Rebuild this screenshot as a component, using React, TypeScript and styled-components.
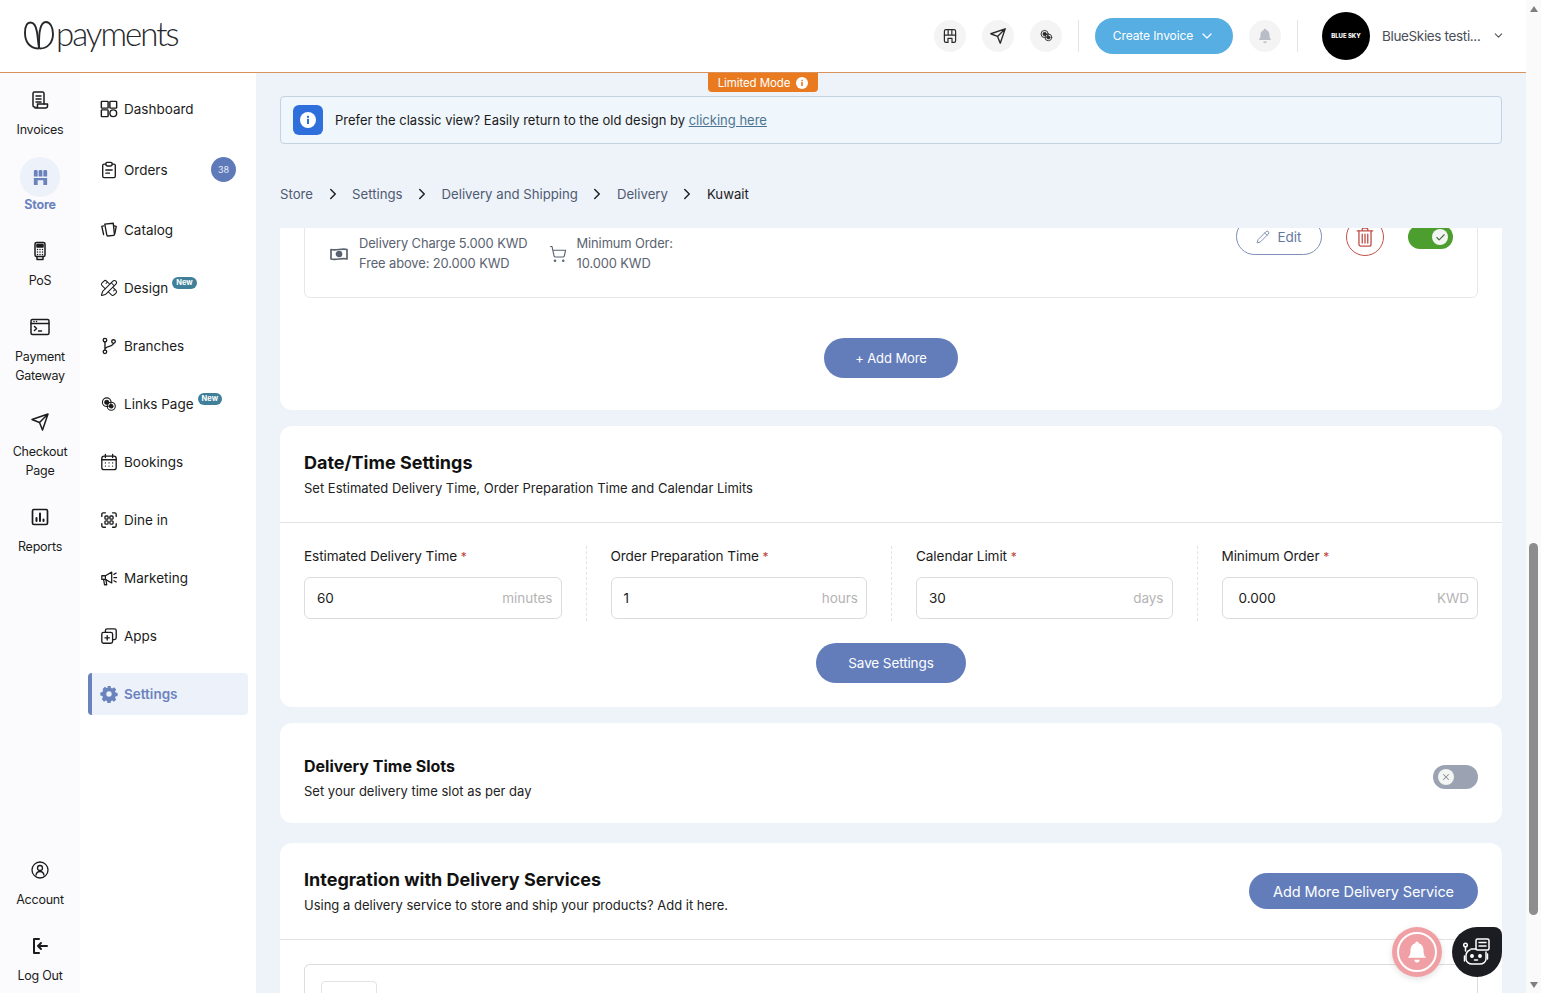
import React from "react";
import styled, { createGlobalStyle } from "styled-components";
import { Check, ChevronDown, ChevronRight, Pencil, ShoppingCart, X, PencilRuler } from "lucide-react";

const Global = createGlobalStyle`
  html, body { margin: 0; padding: 0; height: 100%; overflow: hidden; background: #eef2f9; }
  body { font-family: Inter, "Liberation Sans", sans-serif; color: #1b1b1b; }
  * { box-sizing: border-box; }
`;

const Page = styled.div`display: flex; width: 1541px; height: 993px; overflow: hidden;`;
const Viewport = styled.div`width: 1526px; height: 993px; display: flex; flex-direction: column; position: relative;`;
const Scrollbar = styled.div`width: 15px; height: 993px; background: #fafafa; display: flex; flex-direction: column; align-items: center; justify-content: space-between; padding: 6px 0 5px;`;
const ScrollTrack = styled.div`flex: 1; width: 100%; display: flex; flex-direction: column; justify-content: flex-end; padding: 0 3px 67px;`;
const ScrollThumb = styled.div`height: 372px; width: 9px; background: #8d8d8d; border-radius: 5px;`;
const Arrow = styled.div<{ $down?: boolean }>`
  width: 0; height: 0; border-left: 4px solid transparent; border-right: 4px solid transparent;
  ${(p) => (p.$down ? "border-top: 6px solid #7f7f7f;" : "border-bottom: 6px solid #7f7f7f;")}
`;

const Header = styled.header`height: 73px; flex: none; background: #fff; border-bottom: 1px solid #d9925c; display: flex; align-items: center; padding: 0 21px 1px 24px;`;
const LogoWrap = styled.div`display: flex; align-items: center; gap: 2px; flex: 1; color: #26282b;`;
const LogoText = styled.span`font-family: Lato, sans-serif; font-weight: 300; font-size: 33px; line-height: 40px; letter-spacing: -2px; margin-top: -5px;`;
const RoundIcon = styled.div<{ $muted?: boolean }>`width: 32px; height: 32px; border-radius: 50%; background: #f4f4f4; display: flex; align-items: center; justify-content: center; color: ${(p) => (p.$muted ? "#b9bec6" : "#2a2a2a")};`;
const IconGroup = styled.div`display: flex; gap: 16px; margin-right: 16px;`;
const VRule = styled.div<{ $gap?: number }>`width: 1px; height: 32px; background: #e4e4e4; margin-left: ${(p) => p.$gap ?? 0}px;`;
const CreateBtn = styled.button`
  width: 138px; height: 36px; margin: 0 16px; border: 0; border-radius: 18px; background: #56aee2; color: #fff;
  font: 400 12px Inter, sans-serif; letter-spacing: -0.1px; display: flex; align-items: center; justify-content: center; gap: 6px;
`;
const Avatar = styled.div`width: 48px; height: 48px; border-radius: 50%; background: #000; color: #fff; margin-left: 24px; font-size: 6px; font-weight: 800; display: flex; align-items: center; justify-content: center; white-space: nowrap;`;
const UserName = styled.span`font-size: 13.500px; letter-spacing: -0.35px; color: #4a4f57; margin-left: 12px; width: 110px; white-space: nowrap;`;

const Body = styled.div`flex: 1; display: flex; min-height: 0;`;
const Rail = styled.nav`width: 80px; flex: none; background: #fbfbfd; padding: 17px 0 8px; display: flex; flex-direction: column; justify-content: space-between;`;
const RailGroup = styled.div`display: flex; flex-direction: column; gap: 27px;`;
const RailItem = styled.div<{ $active?: boolean }>`
  display: flex; flex-direction: column; align-items: center; gap: ${(p) => (p.$active ? "0" : "10px")};
  ${(p) => p.$active && "margin-top: -9px;"}
`;
const RailBubble = styled.div`width: 40px; height: 40px; border-radius: 50%; background: #edf1f9; color: #6b83bd; display: flex; align-items: center; justify-content: center; margin-bottom: -2px;`;
const RailLabel = styled.div<{ $active?: boolean }>`
  font-size: 12.500px; line-height: 19px; text-align: center; letter-spacing: -0.25px;
  color: ${(p) => (p.$active ? "#6b83bd" : "#1b1b1b")}; font-weight: ${(p) => (p.$active ? 700 : 400)};
`;
const Side = styled.nav`width: 176px; flex: none; background: #fff; padding: 15px 8px 0; display: flex; flex-direction: column; gap: 16px;`;
const SideRow = styled.div<{ $active?: boolean; $tall?: boolean }>`
  height: ${(p) => (p.$tall ? 47 : 42)}px; display: flex; align-items: center; gap: 6px; padding-left: ${(p) => (p.$active ? 8 : 12)}px; padding-right: 12px; border-radius: 4px;
  font-size: 13.500px; ${(p) => p.$active && "border-left: 4px solid #6b83bd; background: #edf1f9; color: #6b83bd; font-weight: 600;"}
`;
const CountBadge = styled.span`width: 25px; height: 25px; border-radius: 50%; background: #5f7ab9; color: #e8edf8; font-size: 9px; display: flex; align-items: center; justify-content: center; margin-left: auto;`;
const NewBadge = styled.span`height: 12px; padding: 0 4px; border-radius: 7px; background: #3f7f9a; color: #fff; font-size: 7.500px; font-weight: 700; line-height: 12px; margin: -10px 0 0 -2px;`;

const Main = styled.main`flex: 1; min-width: 0; background: #eef2f9; padding: 23px 24px 0; display: flex; flex-direction: column; position: relative; overflow: hidden;`;
const LimitedTab = styled.div`position: absolute; top: 0; left: 452px; width: 110px; height: 19px; background: #e97a1f; color: #fff; border-radius: 0 0 4px 4px; font-size: 11.500px; display: flex; align-items: center; justify-content: center; gap: 6px; letter-spacing: -0.1px;`;
const Notice = styled.div`height: 48px; flex: none; background: #eff6fc; border: 1px solid #c5d2e2; border-radius: 4px; display: flex; align-items: center; gap: 12px; padding-left: 12px; font-size: 13px;`;
const NoticeIcon = styled.div`width: 30px; height: 30px; border-radius: 6px; background: #2f6fdb; display: flex; align-items: center; justify-content: center;`;
const NoticeLink = styled.a`color: #4e7491; text-decoration: underline;`;
const Crumbs = styled.div`height: 84px; flex: none; padding-top: 40px; display: flex; align-items: flex-start; font-size: 13.200px; line-height: 20px; color: #4e5b72;`;
const Crumb = styled.span<{ $current?: boolean }>`${(p) => p.$current && "color: #1b1b1b;"}`;
const CrumbSep = styled.span`display: flex; align-items: center; justify-content: center; width: 39px; height: 20px; color: #222;`;
const Scroller = styled.div`flex: 1; min-height: 0; overflow: hidden;`;
const Card = styled.section<{ $clipped?: boolean; $mt?: number }>`background: #fff; border-radius: 12px; margin-top: ${(p) => (p.$clipped ? -31 : p.$mt ?? 16)}px;`;
const FirstCardBody = styled.div`padding: 10px 24px 32px;`;
const RuleBox = styled.div`border: 1px solid #e8e8e8; border-radius: 6px; padding: 10px 24px 23px; display: flex; align-items: flex-start;`;
const Fee = styled.div<{ $ml?: number }>`display: flex; align-items: center; gap: 10px; margin: 16px 0 0 ${(p) => p.$ml ?? 0}px; font-size: 12.900px; line-height: 20px; color: #5a6270; letter-spacing: -0.1px;`;
const Actions = styled.div`margin-left: auto; display: flex; align-items: flex-start; gap: 24px;`;
const EditBtn = styled.button`width: 86px; height: 37px; border: 1px solid #7d8fb8; border-radius: 19px; background: #fff; color: #64789f; font: 400 13.500px Inter, sans-serif; display: flex; align-items: center; justify-content: center; gap: 7px;`;
const TrashBtn = styled.button`width: 38px; height: 38px; border-radius: 50%; border: 1px solid #c2504a; background: #fff; color: #c2504a; display: flex; align-items: center; justify-content: center; padding: 0;`;
const Toggle = styled.div<{ $on?: boolean; $mt?: number }>`
  width: 45px; height: 24px; border-radius: 12px; background: ${(p) => (p.$on ? "#4c9f2f" : "#9ba3b2")};
  display: flex; align-items: center; justify-content: ${(p) => (p.$on ? "flex-end" : "flex-start")}; padding: 0 5px; flex: none;
  margin-top: ${(p) => p.$mt ?? 0}px;
`;
const Knob = styled.div`width: 16px; height: 16px; border-radius: 50%; background: #f3f5f2; color: #4a6b48; display: flex; align-items: center; justify-content: center;`;
const CenterRow = styled.div<{ $top: number; $bottom?: number }>`display: flex; justify-content: center; padding: ${(p) => p.$top}px 0 ${(p) => p.$bottom ?? 0}px;`;
const PillBtn = styled.button<{ $w: number; $h?: number; $fs?: number; $mt?: number }>`
  width: ${(p) => p.$w}px; height: ${(p) => p.$h ?? 40}px; border: 0; border-radius: 20px; background: #637dbb; color: #fff; flex: none;
  font: 400 ${(p) => p.$fs ?? 13.5}px Inter, sans-serif; letter-spacing: -0.1px; margin-top: ${(p) => p.$mt ?? 0}px;
`;
const CardHead = styled.div<{ $h: number; $pt: number; $divider?: boolean }>`
  height: ${(p) => p.$h}px; padding: ${(p) => p.$pt}px 24px 0; display: flex; justify-content: space-between; align-items: flex-start;
  ${(p) => p.$divider && "border-bottom: 1px solid #e3e3e3;"}
`;
const Title = styled.h2<{ $size?: number }>`margin: 0; font-size: ${(p) => p.$size ?? 18}px; line-height: 24px; font-weight: 700; color: #111;`;
const Sub = styled.p`margin: 2px 0 0; font-size: 13px; line-height: 22px; color: #222;`;
const Fields = styled.div`display: grid; grid-template-columns: repeat(4, 1fr); padding-top: 23px;`;
const Field = styled.div`padding: 0 24px; &:not(:first-child) { border-left: 1px dashed #e3e3e3; } height: 75px;`;
const Label = styled.div`font-size: 13.600px; line-height: 20px; letter-spacing: -0.1px; height: 32px;`;
const Required = styled.span`color: #c2403a; font-size: 12px;`;
const InputBox = styled.div<{ $inset?: number }>`height: 42px; margin-top: -1px; border: 1px solid #dcdcdc; border-radius: 6px; display: flex; align-items: center; justify-content: space-between; padding: 0 8px 0 ${(p) => p.$inset ?? 12}px; font-size: 13.500px;`;
const Unit = styled.span`color: #b4b4b4;`;
const ServiceBox = styled.div`margin: 24px 24px 0; height: 60px; border: 1px solid #dcdcdc; border-bottom: 0; border-radius: 6px 6px 0 0; padding: 16px 16px 0;`;
const ServiceThumb = styled.div`width: 56px; height: 44px; border: 1px solid #e3e3e3; border-radius: 4px;`;
const BellFab = styled.div`position: absolute; left: 1392px; top: 927px; width: 50px; height: 50px; border-radius: 50%; background: #f0a0a5; display: flex; align-items: center; justify-content: center; box-shadow: 0 2px 6px rgba(0,0,0,.12);`;
const BellRing = styled.div`width: 40px; height: 40px; border: 2px solid #fff; border-radius: 50%; display: flex; align-items: center; justify-content: center; color: #fff;`;
const BotFab = styled.div`position: absolute; left: 1452px; top: 927px; width: 50px; height: 50px; border-radius: 25px 8px 25px 25px; background: #1c1d22; color: #fff; display: flex; align-items: center; justify-content: center;`;

const Svg = styled.svg<{ $s?: number; $w?: number }>`
  width: ${(p) => p.$s ?? 20}px; height: ${(p) => p.$s ?? 20}px; flex: none; fill: none; stroke: currentColor; stroke-width: ${(p) => p.$w ?? 1.5}; stroke-linecap: round; stroke-linejoin: round;
`;
type IP = { s?: number; w?: number; children: React.ReactNode };
const I = ({ s, w, children }: IP) => <Svg viewBox="0 0 20 20" $s={s} $w={w}>{children}</Svg>;

const Invoice = () => <I><path d="M5 17H4.500A1.500 1.500 0 0 1 3 15.500V3.500A1.500 1.500 0 0 1 4.500 2h8A1.500 1.500 0 0 1 14 3.500V14" /><path d="M6 6h5M6 9h5M6 12h5" /><path d="M5 18h10.500a2 2 0 0 0 2-2v-2H7.500v2a2 2 0 0 1-2 2" /></I>;
const StoreSolid = () => <Svg viewBox="0 0 20 20" $s={19} $w={0}><path fill="currentColor" d="M3 3.500A1.500 1.500 0 0 1 4.500 2h1A1.500 1.500 0 0 1 7 3.500V9H3zM8 3.500A1.500 1.500 0 0 1 9.500 2h1A1.500 1.500 0 0 1 12 3.500V9H8zM13 3.500A1.500 1.500 0 0 1 14.500 2h1A1.500 1.500 0 0 1 17 3.500V9h-4zM3 10.500h14V17a1 1 0 0 1-1 1h-3v-5H7v5H4a1 1 0 0 1-1-1z" /></Svg>;
const StoreLine = () => <I s={16} w={1.500}><path d="M3 9V4a2 2 0 0 1 2-2h10a2 2 0 0 1 2 2v5zM7.700 2v7M12.300 2v7" /><path d="M3 9v7a2 2 0 0 0 2 2h2.500v-5h5v5H15a2 2 0 0 0 2-2V9" /></I>;
const Pos = () => <I><rect x="5" y="1.500" width="10" height="14" rx="1.500" /><rect x="7" y="3.500" width="6" height="2.500" fill="currentColor" /><path d="M7.500 8.500h.01M10 8.500h.01M12.500 8.500h.01M7.500 11h.01M10 11h.01M12.500 11h.01M7.500 13.500h.01M10 13.500h.01M12.500 13.500h.01" /><path d="M7 15.500v3h6v-3" /></I>;
const Gateway = () => <I><rect x="1" y="2.500" width="18" height="15" rx="1.500" /><path d="M1 6.500h18M4 4.500h.01M6.500 4.500h.01" /><path d="M4.500 9.500l2 2-2 2M8.500 14h3" /></I>;
const Plane = ({ s = 20 }: { s?: number }) => <I s={s}><path d="M2 7.500L18 2l-5.500 16-3-7.500zM9.500 10.500L18 2" /></I>;
const Reports = () => <I w={1.700}><rect x="2.500" y="2.500" width="15" height="15" rx="1.500" /><path d="M6.500 14v-3M10 14V6.500M13.500 14v-1.500" strokeWidth="2" /></I>;
const Account = () => <I w={1.300}><circle cx="10" cy="10" r="8" /><circle cx="10" cy="8" r="2.500" /><path d="M6 15c.5-2.500 2-3.500 4-3.500s3.500 1 4 3.500" /></I>;
const Logout = () => <I w={2}><path d="M9 3H4v14h5" /><path d="M17 10H8M11 7l-3 3 3 3" /></I>;
const Dash = () => <I s={18} w={1.600}><rect x="1.500" y="1.500" width="7.500" height="7.500" rx=".8" /><rect x="11" y="1.500" width="7.500" height="7.500" rx=".8" /><rect x="1.500" y="11" width="7.500" height="7.500" rx=".8" /><circle cx="14.750" cy="14.750" r="3.750" /></I>;
const Orders = () => <I s={18}><path d="M6.500 3.500H4.500A1.500 1.500 0 0 0 3 5v12a1.500 1.500 0 0 0 1.500 1.500h11A1.500 1.500 0 0 0 17 17V5a1.500 1.500 0 0 0-1.500-1.500h-2" /><rect x="6.500" y="1.500" width="7" height="4" rx="1.500" /><path d="M6.500 10h7M6.500 13.500h4" /></I>;
const Catalog = () => <I s={18}><path d="M6 3h9.500v12.500a1 1 0 0 1-1 1H8a1 1 0 0 1-1-1z" transform="rotate(-6 10 10)" /><path d="M4 5.500L2 6l2 9M16 5.500l2 .5-1.500 8" /></I>;
const Branch = () => <I s={18}><circle cx="5.500" cy="3.500" r="2" /><circle cx="5.500" cy="16.500" r="2" /><circle cx="15" cy="5" r="2" /><path d="M5.500 5.500v9M15 7c0 4-9.500 3-9.500 7" /></I>;
const Links = ({ s = 16 }: { s?: number }) => <I s={s} w={1.200}><circle cx="7.500" cy="8" r="4.800" /><circle cx="12.500" cy="12.500" r="4.500" /><circle cx="7.500" cy="8" r="2.200" fill="currentColor" /><circle cx="12.500" cy="12.500" r="2" fill="currentColor" /></I>;
const Calendar = () => <I s={18}><rect x="2" y="3.500" width="16" height="15" rx="2.500" /><path d="M2 7.500h16M6 1.500v3.500M14 1.500v3.500" /><path d="M6 11h.01M10 11h.01M14 11h.01M6 14.500h.01M10 14.500h.01M14 14.500h.01" /></I>;
const DineIn = () => <I s={18}><path d="M2 6V3.500A1.500 1.500 0 0 1 3.500 2H6M14 2h2.500A1.500 1.500 0 0 1 18 3.500V6M18 14v2.500a1.500 1.500 0 0 1-1.500 1.500H14M6 18H3.500A1.500 1.500 0 0 1 2 16.500V14" /><rect x="5.500" y="5.500" width="3.500" height="3.500" rx="1" /><rect x="11" y="5.500" width="3.500" height="3.500" rx="1" /><rect x="5.500" y="11" width="3.500" height="3.500" rx="1" /><rect x="11" y="11" width="3.500" height="3.500" rx="1" /></I>;
const Marketing = () => <I s={18} w={1.400}><path d="M2 7.500h4l7-4v12l-7-4H2z" /><path d="M6 7.500v4M4 11.500l1 6h2.500l-1-6" /><path d="M15.500 6l2.500-1.500M15.500 9.500H18.500M15.500 13l2.500 1.500" /></I>;
const Apps = () => <I s={18}><rect x="2" y="6" width="12" height="12" rx="2" /><path d="M6 6V4a2 2 0 0 1 2-2h8a2 2 0 0 1 2 2v8a2 2 0 0 1-2 2h-2M8 9.500v5M5.500 12h5" /></I>;
const Gear = () => <Svg viewBox="0 0 20 20" $s={18} $w={0}><path fill="currentColor" fillRule="evenodd" d="M8.300 1h3.400l.5 2.300 1.400.6 2-1.300 2.400 2.400-1.300 2 .6 1.400 2.300.5v3.400l-2.300.5-.6 1.400 1.300 2-2.400 2.400-2-1.300-1.400.6-.5 2.300H8.300l-.5-2.300-1.400-.6-2 1.300L2 15.600l1.300-2-.6-1.400-2.300-.5V8.300l2.300-.5.6-1.400L3 4.400 5.400 2l2 1.300 1.400-.6zM10 7a3 3 0 1 0 0 6 3 3 0 0 0 0-6z" /></Svg>;
const Money = () => <I w={1.700}><path d="M2 5.500c5 1.500 11-1.500 16 0v9.500c-5-1.500-11 1.500-16 0z" /><circle cx="10" cy="10" r="2.500" fill="currentColor" /></I>;
const TrashIcon = () => <Svg viewBox="0 0 20 20" $s={22} $w={1.200}><path d="M3 4.500h14M7.500 4.500V3a1 1 0 0 1 1-1h3a1 1 0 0 1 1 1v1.500" /><path d="M4.500 4.500v12a1.800 1.800 0 0 0 1.800 1.800h7.400a1.800 1.800 0 0 0 1.800-1.800v-12" /><path d="M7.500 7.500v8M10 7.500v8M12.500 7.500v8" /></Svg>;
const Bell = ({ s = 18 }: { s?: number }) => <Svg viewBox="0 0 20 20" $s={s} $w={0}><path fill="currentColor" d="M10 2a1.300 1.300 0 0 1 1.300 1.300c2.500.7 3.700 2.700 3.700 5.200 0 3.500.8 4.500 2 6H3c1.200-1.500 2-2.500 2-6 0-2.500 1.200-4.500 3.700-5.200A1.300 1.300 0 0 1 10 2zM8 16h4a2 2 0 0 1-4 0z" /></Svg>;
const Bot = () => <Svg viewBox="0 0 30 30" $s={30} $w={1.500}><rect x="14" y="2" width="13" height="11" rx="1.500" /><path d="M17 5.500h7M17 9h7" /><path d="M9 12h5M8 13c-3 1-4 4-4 6v3c0 3 3 5 6 5h8c3 0 6-2 6-5v-7" /><circle cx="3.500" cy="8" r="1.800" /><path d="M3.500 10v4M2.500 19v5M25.500 17v5" /><circle cx="10" cy="19" r="1.200" fill="currentColor" /><circle cx="18" cy="19" r="1.200" fill="currentColor" /><path d="M12.500 23h3" /></Svg>;
const LogoMark = () => (
  <svg viewBox="0 0 30 29" width="30" height="29" fill="none" stroke="currentColor" strokeWidth="1.900" strokeLinecap="round">
    <path d="M14 27.500C5 27 1 20 1 12 1 5 3 1.500 6.500 1.500 10 1.500 12 5 13 11c1 6 1 11 2 15.500" />
    <path d="M15 26.500c0-6 0-13.500 1-17.500 1-5 3-8 6-8 4 0 7 5 7 12 0 8-5 14.500-13 14.500" />
  </svg>
);

const railTop = [
  { label: ["Invoices"], icon: <Invoice /> },
  { label: ["Store"], icon: <StoreSolid />, active: true },
  { label: ["PoS"], icon: <Pos /> },
  { label: ["Payment", "Gateway"], icon: <Gateway /> },
  { label: ["Checkout", "Page"], icon: <Plane /> },
  { label: ["Reports"], icon: <Reports /> },
];
const railBottom = [
  { label: ["Account"], icon: <Account /> },
  { label: ["Log Out"], icon: <Logout /> },
];
const sideItems: { label: string; icon: React.ReactNode; count?: string; isNew?: boolean; active?: boolean }[] = [
  { label: "Dashboard", icon: <Dash /> },
  { label: "Orders", icon: <Orders />, count: "38" },
  { label: "Catalog", icon: <Catalog /> },
  { label: "Design", icon: <PencilRuler size={18} strokeWidth={1.400} />, isNew: true },
  { label: "Branches", icon: <Branch /> },
  { label: "Links Page", icon: <Links s={18} />, isNew: true },
  { label: "Bookings", icon: <Calendar /> },
  { label: "Dine in", icon: <DineIn /> },
  { label: "Marketing", icon: <Marketing /> },
  { label: "Apps", icon: <Apps /> },
  { label: "Settings", icon: <Gear />, active: true },
];
const crumbs = ["Store", "Settings", "Delivery and Shipping", "Delivery", "Kuwait"];
const fields = [
  { label: "Estimated Delivery Time", value: "60", unit: "minutes" },
  { label: "Order Preparation Time", value: "1", unit: "hours" },
  { label: "Calendar Limit", value: "30", unit: "days" },
  { label: "Minimum Order", value: "0.000", unit: "KWD", inset: 16 },
];

const RailEntry = ({ item }: { item: { label: string[]; icon: React.ReactNode; active?: boolean } }) => (
  <RailItem $active={item.active}>
    {item.active ? <RailBubble>{item.icon}</RailBubble> : item.icon}
    <RailLabel $active={item.active}>
      {item.label.map((l) => <div key={l}>{l}</div>)}
    </RailLabel>
  </RailItem>
);

export default function App() {
  return (
    <Page>
      <Global />
      <Viewport>
        <Header>
          <LogoWrap>
            <LogoMark />
            <LogoText>payments</LogoText>
          </LogoWrap>
          <IconGroup>
            <RoundIcon><StoreLine /></RoundIcon>
            <RoundIcon><Plane s={18} /></RoundIcon>
            <RoundIcon><Links s={15} /></RoundIcon>
          </IconGroup>
          <VRule />
          <CreateBtn>Create Invoice <ChevronDown size={16} strokeWidth={1.800} /></CreateBtn>
          <RoundIcon $muted><Bell /></RoundIcon>
          <VRule $gap={16} />
          <Avatar>BLUE SKY</Avatar>
          <UserName>BlueSkies testi...</UserName>
          <ChevronDown size={13} color="#555" />
        </Header>
        <Body>
          <Rail>
            <RailGroup>{railTop.map((r) => <RailEntry key={r.label[0]} item={r} />)}</RailGroup>
            <RailGroup>{railBottom.map((r) => <RailEntry key={r.label[0]} item={r} />)}</RailGroup>
          </Rail>
          <Side>
            {sideItems.map((s) => (
              <SideRow key={s.label} $active={s.active} $tall={!!s.count}>
                {s.icon}
                <span>{s.label}</span>
                {s.count && <CountBadge>{s.count}</CountBadge>}
                {s.isNew && <NewBadge>New</NewBadge>}
              </SideRow>
            ))}
          </Side>
          <Main>
            <LimitedTab>
              Limited Mode
              <svg width="12" height="12" viewBox="0 0 12 12"><circle cx="6" cy="6" r="6" fill="#fff" /><rect x="5.200" y="5" width="1.600" height="4" fill="#e97a1f" /><rect x="5.200" y="2.800" width="1.600" height="1.400" fill="#e97a1f" /></svg>
            </LimitedTab>
            <Notice>
              <NoticeIcon>
                <svg width="16" height="16" viewBox="0 0 16 16"><circle cx="8" cy="8" r="8" fill="#fff" /><rect x="7" y="6.800" width="2" height="5.200" fill="#2f6fdb" /><rect x="7" y="3.800" width="2" height="2" fill="#2f6fdb" /></svg>
              </NoticeIcon>
              <span>Prefer the classic view? Easily return to the old design by <NoticeLink>clicking here</NoticeLink></span>
            </Notice>
            <Crumbs>
              {crumbs.map((c, i) => (
                <React.Fragment key={c}>
                  <Crumb $current={i === crumbs.length - 1}>{c}</Crumb>
                  {i < crumbs.length - 1 && <CrumbSep><ChevronRight size={18} strokeWidth={2} /></CrumbSep>}
                </React.Fragment>
              ))}
            </Crumbs>
            <Scroller>
              <Card $clipped>
                <FirstCardBody>
                  <RuleBox>
                    <Fee>
                      <Money />
                      <div>Delivery Charge 5.000 KWD<br />Free above: 20.000 KWD</div>
                    </Fee>
                    <Fee $ml={21}>
                      <ShoppingCart size={18} strokeWidth={1.500} />
                      <div>Minimum Order:<br />10.000 KWD</div>
                    </Fee>
                    <Actions>
                      <EditBtn><Pencil size={14} strokeWidth={1.400} /> Edit</EditBtn>
                      <TrashBtn><TrashIcon /></TrashBtn>
                      <Toggle $on $mt={7}><Knob><Check size={11} strokeWidth={2.500} /></Knob></Toggle>
                    </Actions>
                  </RuleBox>
                  <CenterRow $top={40}><PillBtn $w={134} $fs={13}>+ Add More</PillBtn></CenterRow>
                </FirstCardBody>
              </Card>
              <Card>
                <CardHead $h={97} $pt={25} $divider>
                  <div>
                    <Title>Date/Time Settings</Title>
                    <Sub>Set Estimated Delivery Time, Order Preparation Time and Calendar Limits</Sub>
                  </div>
                </CardHead>
                <Fields>
                  {fields.map((f) => (
                    <Field key={f.label}>
                      <Label>{f.label} <Required>*</Required></Label>
                      <InputBox $inset={f.inset}><span>{f.value}</span><Unit>{f.unit}</Unit></InputBox>
                    </Field>
                  ))}
                </Fields>
                <CenterRow $top={22} $bottom={24}><PillBtn $w={150}>Save Settings</PillBtn></CenterRow>
              </Card>
              <Card>
                <CardHead $h={100} $pt={31}>
                  <div>
                    <Title $size={16}>Delivery Time Slots</Title>
                    <Sub>Set your delivery time slot as per day</Sub>
                  </div>
                  <Toggle $mt={11}><Knob><X size={10} strokeWidth={2.500} color="#8a8f99" /></Knob></Toggle>
                </CardHead>
              </Card>
              <Card $mt={20}>
                <CardHead $h={97} $pt={25} $divider>
                  <div>
                    <Title>Integration with Delivery Services</Title>
                    <Sub>Using a delivery service to store and ship your products? Add it here.</Sub>
                  </div>
                  <PillBtn $w={229} $h={36} $fs={14.500} $mt={5}>Add More Delivery Service</PillBtn>
                </CardHead>
                <ServiceBox><ServiceThumb /></ServiceBox>
              </Card>
            </Scroller>
          </Main>
        </Body>
        <BellFab><BellRing><Bell s={26} /></BellRing></BellFab>
        <BotFab><Bot /></BotFab>
      </Viewport>
      <Scrollbar>
        <Arrow />
        <ScrollTrack><ScrollThumb /></ScrollTrack>
        <Arrow $down />
      </Scrollbar>
    </Page>
  );
}
